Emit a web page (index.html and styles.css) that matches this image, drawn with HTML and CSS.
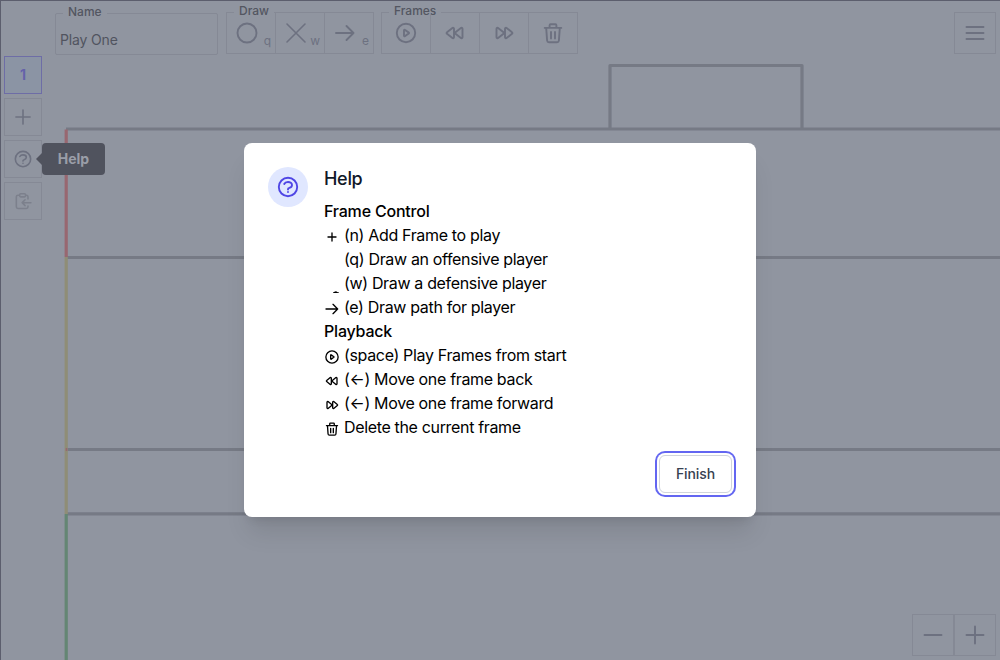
FILE: index.html
```
<!DOCTYPE html>
<html lang="en">
<head>
<meta charset="utf-8">
<title>Play One</title>
<link rel="stylesheet" href="styles.css">
</head>
<body>
<svg width="0" height="0" class="defs">
  <symbol id="plus" viewBox="0 0 24 24"><path d="M12 3.500v17M3.500 12h17"/></symbol>
  <symbol id="miniplus" viewBox="0 0 24 24"><path d="M12 6v12M6 12h12"/></symbol>
  <symbol id="arrow" viewBox="0 0 24 24"><path d="M3 12h17.500M13.500 5l7 7-7 7"/></symbol>
  <symbol id="play" viewBox="0 0 24 24"><circle cx="12" cy="12" r="9.200"/><path d="M10 9.200v5.600a.5.5 0 0 0 .8.4l4-2.800a.5.5 0 0 0 0-.8l-4-2.800a.5.5 0 0 0-.8.4z"/></symbol>
  <symbol id="back" viewBox="0 0 24 24"><path d="M11 7.700v8.600a1 1 0 0 1-1.600.8L4 12.800a1 1 0 0 1 0-1.600l5.400-4.300a1 1 0 0 1 1.600.8zM19.500 7.700v8.600a1 1 0 0 1-1.600.8L12.500 12.800a1 1 0 0 1 0-1.600l5.400-4.300a1 1 0 0 1 1.600.8z"/></symbol>
  <symbol id="forward" viewBox="0 0 24 24"><path d="M4.500 7.700v8.600a1 1 0 0 0 1.600.8l5.400-4.300a1 1 0 0 0 0-1.600L6.100 6.900a1 1 0 0 0-1.600.8zM13 7.700v8.600a1 1 0 0 0 1.600.8l5.400-4.300a1 1 0 0 0 0-1.600l-5.400-4.300a1 1 0 0 0-1.600.8z"/></symbol>
  <symbol id="trash" viewBox="0 0 24 24"><path d="M3.700 6.900h16.600M5.200 7l.9 12.500a1.900 1.900 0 0 0 1.900 1.700h8a1.900 1.900 0 0 0 1.900-1.700L18.800 7M8.600 6.500V4.300a1 1 0 0 1 1-1h4.800a1 1 0 0 1 1 1v2.200M10 11v6.500M14 11v6.500"/></symbol>
  <symbol id="help" viewBox="0 0 24 24"><circle cx="12" cy="12" r="9.200"/><path d="M8.200 9c.6-1.200 2-2 3.800-2 2.200 0 4 1.300 4 3s-1.300 2.500-2.700 2.900c-.8.2-1.300.6-1.300 1.300v.3M12 17v.1"/></symbol>
  <symbol id="paste" viewBox="0 0 24 24"><path d="M8 5H6a2 2 0 0 0-2 2v12a2 2 0 0 0 2 2h10a2 2 0 0 0 2-2v-1M15 5h1a2 2 0 0 1 2 2v2.500M8 4.500a1.200 1.200 0 0 1 1.200-1.200h4.600A1.200 1.200 0 0 1 15 4.500v1.300A1.200 1.200 0 0 1 13.800 7H9.200A1.200 1.200 0 0 1 8 5.800zM21.500 14H11M14.500 10.500L11 14l3.500 3.500"/></symbol>
</svg>

<div class="app">
  <svg class="pitch" viewBox="0 0 1000 660">
    <path class="line" d="M66 129H1000M66 257.500H1000M66 449.500H1000M66 513.800H1000M610 129V65.500H802V129"/>
    <path class="red" d="M66.200 129.500V257"/>
    <path class="yellow" d="M66.200 257V514"/>
    <path class="green" d="M66.200 514V660"/>
    <path class="mark" d="M66.500 448V451"/>
  </svg>

  <header class="topbar">
    <div class="field"><span class="legend">Name</span><span class="value">Play One</span></div>
    <div class="group draw"><span class="legend">Draw</span>
      <div class="cell"><svg class="icon"><circle cx="12" cy="12" r="9.500"/></svg><kbd>q</kbd></div>
      <div class="cell"><svg class="icon thin"><path d="M3 3l18 18M21 3L3 21"/></svg><kbd>w</kbd></div>
      <div class="cell"><svg class="icon"><use href="#arrow"/></svg><kbd>e</kbd></div>
    </div>
    <div class="group frames"><span class="legend">Frames</span>
      <div class="cell"><svg class="icon"><use href="#play"/></svg></div>
      <div class="cell"><svg class="icon"><use href="#back"/></svg></div>
      <div class="cell"><svg class="icon"><use href="#forward"/></svg></div>
      <div class="cell"><svg class="icon"><use href="#trash"/></svg></div>
    </div>
    <div class="square menu"><svg class="icon"><path d="M3.500 6h17M3.500 12h17M3.500 18h17"/></svg></div>
  </header>

  <nav class="side">
    <div class="tile active">1</div>
    <div class="tile"><svg class="icon s20"><use href="#plus"/></svg></div>
    <div class="tile"><svg class="icon s20"><use href="#help"/></svg><span class="tooltip">Help</span></div>
    <div class="tile faded"><svg class="icon s20"><use href="#paste"/></svg></div>
  </nav>

  <div class="zoom">
    <div class="square"><svg class="icon"><path d="M3.500 12h17"/></svg></div>
    <div class="square"><svg class="icon"><path d="M3.500 12h17M12 3.500v17"/></svg></div>
  </div>

  <div class="overlay">
    <section class="modal">
      <div class="content">
        <div class="badge"><svg class="icon"><use href="#help"/></svg></div>
        <div class="text">
          <h3>Help</h3>
          <h4>Frame Control</h4>
          <p><svg class="mini"><use href="#miniplus"/></svg><span>(n) Add Frame to play</span></p>
          <p><svg class="mini"></svg><span>(q) Draw an offensive player</span></p>
          <p><svg class="mini"><path class="dot" d="M9 16c0-.8.700-1 1.500-1.300 1-.7 2-.7 2.800.2.900.2 1.700.3 1.700 1.100z"/></svg><span>(w) Draw a defensive player</span></p>
          <p><svg class="mini"><use href="#arrow" width="16" height="16"/></svg><span>(e) Draw path for player</span></p>
          <h4>Playback</h4>
          <p><svg class="mini"><use href="#play"/></svg><span>(space) Play Frames from start</span></p>
          <p><svg class="mini"><use href="#back"/></svg><span>(←) Move one frame back</span></p>
          <p><svg class="mini"><use href="#forward"/></svg><span>(←) Move one frame forward</span></p>
          <p><svg class="mini"><use href="#trash"/></svg><span>Delete the current frame</span></p>
        </div>
      </div>
      <div class="actions"><button class="finish">Finish</button></div>
    </section>
  </div>
</div>
</body>
</html>
```
FILE: styles.css
```
* { box-sizing: border-box; }
body { margin: 0; font-family: Inter, "Liberation Sans", sans-serif; }
.defs { position: absolute; }
.app {
  position: relative;
  width: 1000px;
  height: 660px;
  overflow: hidden;
  background: #9095a0;
  border-top: 1px solid #5c5e6d;
  border-left: 1px solid #5c5e6d;
}
.pitch { position: absolute; left: -1px; top: -1px; width: 1000px; height: 660px; fill: none; stroke-width: 3.2; }
.line { stroke: #767a85; stroke-linejoin: round; }
.red { stroke: #986770; }
.yellow { stroke: #8f8d76; }
.green { stroke: #648673; }
.mark { stroke: #986770; stroke-width: 1.5; }

.icon { display: block; width: 24px; height: 24px; fill: none; stroke: #6d7180; stroke-width: 1.9; stroke-linecap: round; stroke-linejoin: round; }
.icon.thin { stroke-width: 1.6; }
.icon.s20 { width: 20px; height: 20px; }

.topbar { position: relative; display: flex; align-items: flex-start; padding: 11px 4px 0 54px; }
.field, .group { position: relative; border: 1px solid #858995; height: 42px; display: flex; }
.field { width: 163px; margin-top: 1px; margin-right: 8px; padding: 17px 0 0 4px; border-radius: 2px; }
.value { font-size: 14px; line-height: 18px; letter-spacing: -.15px; color: #51545f; }
.legend { position: absolute; top: -9px; left: 7px; padding: 0 5px; font-size: 12px; line-height: 14px; font-weight: 500; color: #535661; background: #9095a0; }
.draw { margin-right: 7px; }
.cell { position: relative; width: 49px; height: 40px; padding: 8px 12px; border-right: 1px solid #858995; }
.draw .cell { padding-left: 8px; }
.cell:last-child { border-right: 0; width: 48px; }
.cell kbd { position: absolute; right: 4px; bottom: 4px; font: 12px/16px Inter, sans-serif; color: #6d7180; }
.square { width: 42px; height: 42px; padding: 8px; border: 1px solid #858995; }
.menu { margin-left: auto; }

.side { position: relative; display: flex; flex-direction: column; gap: 4px; width: 38px; margin: 1px 0 0 3px; }
.tile { position: relative; width: 38px; height: 38px; display: flex; align-items: center; justify-content: center; border: 1px solid #858995; font-size: 14px; font-weight: 700; }
.active { padding-bottom: 1px; color: #6562aa; border-color: #6e6da6; background: #8b94a4; }
.faded .icon { stroke: #7c808c; }
.tooltip { position: absolute; left: 37px; top: 2px; width: 63px; height: 32px; border-radius: 4px; background: #50535e; color: #9a9ea8; font-size: 14px; line-height: 32px; text-align: center; }
.tooltip::before { content: ""; position: absolute; left: -6px; top: 10px; border: 6px solid transparent; border-right-color: #50535e; border-left: 0; }

.zoom { position: absolute; right: 4px; bottom: 4px; display: flex; }

.overlay { position: absolute; inset: -1px 0 0 -1px; display: flex; align-items: center; justify-content: center; }
.modal { width: 512px; height: 374px; padding: 24px; background: #fff; border-radius: 8px; box-shadow: 0 20px 25px -5px rgba(0,0,0,.1), 0 8px 10px -6px rgba(0,0,0,.1); }
.content { display: flex; gap: 16px; }
.badge { width: 40px; height: 40px; padding: 8px; border-radius: 50%; background: #e0e7ff; }
.badge .icon { stroke: #4f46e5; stroke-width: 1.9; }
h3, h4, p { margin: 0; }
h3 { font-size: 18px; line-height: 24px; font-weight: 500; letter-spacing: -.3px; color: #111827; margin-bottom: 8px; }
h4 { font-size: 16px; line-height: 24px; font-weight: 500; letter-spacing: -.2px; }
p { display: flex; gap: 4px; font-size: 16px; line-height: 24px; letter-spacing: -.34px; white-space: nowrap; }
.mini { width: 16px; height: 16px; margin-top: 6px; fill: none; stroke: #000; stroke-width: 2; stroke-linecap: round; stroke-linejoin: round; }
.mini .dot { fill: #000; stroke: none; }
.actions { display: flex; justify-content: flex-end; margin-top: 16px; }
.finish { width: 73px; height: 38px; padding: 0; border: 1px solid #d1d5db; border-radius: 6px; background: #fff; box-shadow: 0 0 0 2px #fff, 0 0 0 4px #6366f1; font: 500 14px/20px Inter, sans-serif; letter-spacing: -.1px; color: #374151; }
```
